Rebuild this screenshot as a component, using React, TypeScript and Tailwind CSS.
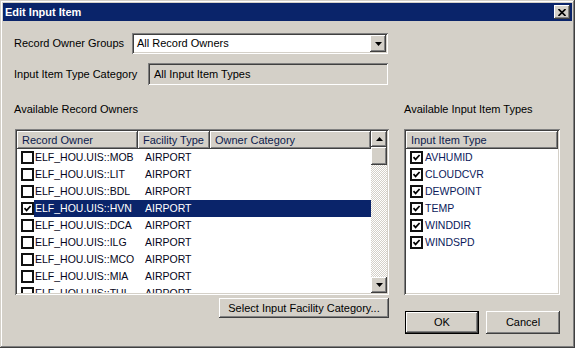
import React from "react";

const raised =
  "bg-[#d4d0c8] shadow-[inset_-1px_-1px_#404040,inset_1px_1px_#fff,inset_-2px_-2px_#808080,inset_2px_2px_#d4d0c8]";
const sunken =
  "shadow-[inset_1px_1px_#808080,inset_-1px_-1px_#fff,inset_2px_2px_#404040,inset_-2px_-2px_#d4d0c8]";

const owners = ["MOB", "LIT", "BDL", "HVN", "DCA", "ILG", "MCO", "MIA", "TUL"];
const itemTypes = ["AVHUMID", "CLOUDCVR", "DEWPOINT", "TEMP", "WINDDIR", "WINDSPD"];

function Check({ checked }: { checked: boolean }) {
  return (
    <div className="w-[13px] h-[13px] shrink-0 border-2 border-[#111] bg-white flex items-center justify-center">
      {checked && (
        <svg width="9" height="9" viewBox="0 0 9 9">
          <path d="M1.5 4.2 L3.6 6.4 L7.6 2" fill="none" stroke="#000" strokeWidth="1.7" />
        </svg>
      )}
    </div>
  );
}

function Arrow({ up }: { up?: boolean }) {
  return (
    <svg width="7" height="4" viewBox="0 0 7 4">
      <path d={up ? "M3.5 0 L7 4 L0 4 Z" : "M0 0 L7 0 L3.5 4 Z"} fill="#000" />
    </svg>
  );
}

export default function App() {
  return (
    <div
      className="w-[575px] h-[348px] bg-[#d4d0c8] p-[3px] text-[11px] text-black shadow-[inset_-1px_-1px_#404040,inset_1px_1px_#d4d0c8,inset_-2px_-2px_#808080,inset_2px_2px_#fff] overflow-hidden"
      style={{ fontFamily: '"Liberation Sans", Arial, sans-serif' }}
    >
      {/* title bar */}
      <div className="h-[18px] bg-[#0a246a] flex items-center justify-between pl-[2px] pr-[2px]">
        <span className="text-white font-bold text-[11px] leading-none">Edit Input Item</span>
        <div className={`${raised} w-[16px] h-[14px] flex items-center justify-center`}>
          <svg width="8" height="7" viewBox="0 0 8 7">
            <path d="M0.5 0 L7.5 7 M7.5 0 L0.5 7" stroke="#000" strokeWidth="1.6" />
          </svg>
        </div>
      </div>

      <div className="pl-[11px] pt-[12px]">
        <div className="flex items-center h-[21px]">
          <span className="w-[118px]">Record Owner Groups</span>
          <div className={`${sunken} bg-white w-[256px] h-[21px] flex items-center justify-between pl-[5px] pr-[2px]`}>
            <span>All Record Owners</span>
            <div className={`${raised} w-[16px] h-[17px] flex items-center justify-center`}>
              <Arrow />
            </div>
          </div>
        </div>

        <div className="flex items-center h-[22px] mt-[9px]">
          <span className="w-[134px]">Input Item Type Category</span>
          <div className={`${sunken} bg-[#d4d0c8] w-[240px] h-[22px] flex items-center pl-[6px]`}>
            <span>All Input Item Types</span>
          </div>
        </div>

        <div className="flex mt-[17px]">
          {/* left column */}
          <div className="w-[375px] flex flex-col">
            <div className="h-[14px] leading-[14px]">Available Record Owners</div>
            <div className={`${sunken} bg-white ml-[1px] mt-[13px] w-[374px] h-[166px] p-[2px] flex`}>
              <div className="flex-1 flex flex-col overflow-hidden">
                <div className="flex h-[18px] shrink-0 text-[#0c1a4c]">
                  <div className={`${raised} w-[121px] pl-[5px] flex items-center`}>Record Owner</div>
                  <div className={`${raised} w-[72px] pl-[5px] flex items-center`}>Facility Type</div>
                  <div className={`${raised} flex-1 pl-[5px] flex items-center`}>Owner Category</div>
                </div>
                {owners.map((o) => {
                  const sel = o === "HVN";
                  return (
                    <div key={o} className="flex items-center h-[17px] shrink-0">
                      <div className="w-[17px] shrink-0 pl-[4px]">
                        <Check checked={sel} />
                      </div>
                      <div
                        className={`flex-1 h-full flex items-center text-[10.5px] ${
                          sel ? "bg-[#0a246a] text-white" : "text-[#050520]"
                        }`}
                      >
                        <span className="w-[111px] pl-[1px]">ELF_HOU.UIS::{o}</span>
                        <span>AIRPORT</span>
                      </div>
                    </div>
                  );
                })}
              </div>
              <div className="w-[16px] flex flex-col">
                <div className={`${raised} h-[16px] flex items-center justify-center`}>
                  <Arrow up />
                </div>
                <div className={`${raised} h-[18px]`} />
                <div className="flex-1 bg-[repeating-conic-gradient(#d4d0c8_0_25%,#fff_0_50%)] bg-[length:2px_2px]" />
                <div className={`${raised} h-[16px] flex items-center justify-center`}>
                  <Arrow />
                </div>
              </div>
            </div>
            <div className={`${raised} self-end mt-[3px] w-[170px] h-[20px] flex items-center justify-center`}>
              Select Input Facility Category...
            </div>
          </div>

          {/* right column */}
          <div className="ml-[15px] w-[156px] flex flex-col">
            <div className="h-[14px] leading-[14px]">Available Input Item Types</div>
            <div className={`${sunken} bg-white mt-[13px] h-[166px] p-[2px] flex flex-col`}>
              <div className={`${raised} h-[18px] shrink-0 pl-[5px] flex items-center text-[#0c1a4c]`}>
                Input Item Type
              </div>
              {itemTypes.map((t) => (
                <div key={t} className="flex items-center h-[17px] shrink-0 pl-[4px] gap-[2px]">
                  <Check checked />
                  <span className="text-[10.5px] text-[#0c1a5c]">{t}</span>
                </div>
              ))}
            </div>
            <div className="flex gap-[7px] mt-[16px] ml-[1px]">
              <div className="w-[74px] h-[23px] border border-black">
                <div className={`${raised} w-full h-full flex items-center justify-center`}>OK</div>
              </div>
              <div className={`${raised} w-[74px] h-[23px] flex items-center justify-center`}>Cancel</div>
            </div>
          </div>
        </div>
      </div>
    </div>
  );
}
